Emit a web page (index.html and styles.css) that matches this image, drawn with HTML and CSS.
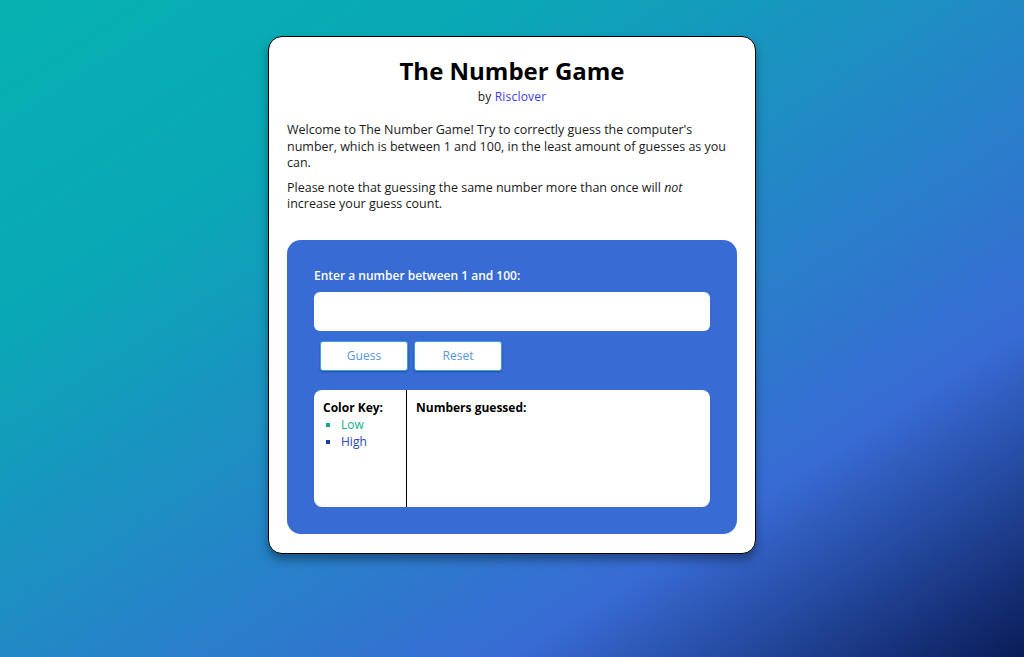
FILE: index.html
```html
<!DOCTYPE html>
<html lang="en">
<head>
<meta charset="utf-8">
<title>The Number Game</title>
<link rel="stylesheet" href="styles.css">
</head>
<body>
<main class="card">
  <header class="head">
    <h1 class="title">The Number Game</h1>
    <p class="byline">by <a class="author" href="#">Risclover</a></p>
  </header>
  <p class="intro">Welcome to The Number Game! Try to correctly guess the computer's number, which is between 1 and 100, in the least amount of guesses as you can.</p>
  <p class="intro">Please note that guessing the same number more than once will <em>not</em> increase your guess count.</p>
  <section class="panel">
    <label class="prompt" for="guess">Enter a number between 1 and 100:</label>
    <input class="field" id="guess" type="text">
    <div class="actions">
      <button class="btn" type="button">Guess</button>
      <button class="btn" type="button">Reset</button>
    </div>
    <div class="results">
      <div class="key">
        <div class="heading">Color Key:</div>
        <ul class="key-list">
          <li class="low">Low</li>
          <li class="high">High</li>
        </ul>
      </div>
      <div class="guessed">
        <div class="heading">Numbers guessed:</div>
      </div>
    </div>
  </section>
</main>
</body>
</html>
```

FILE: styles.css
```css
* { box-sizing: border-box; }
html, body { height: 100%; }
body {
  margin: 0;
  font-family: "Open Sans", "DejaVu Sans", sans-serif;
  font-size: 12px;
  color: #1a1a1a;
  background: linear-gradient(to bottom right, #05b1b1 0%, #0aa8b6 25%, #386bd4 75%, #0a1c58 100%);
  padding-top: 36px;
}
.card {
  width: 488px;
  margin: 0 auto;
  background: #fff;
  border: 1px solid #000;
  border-radius: 14px;
  padding: 17px 18px 19px;
  box-shadow: 0 6px 10px rgba(0, 0, 0, 0.35);
}
.head { text-align: center; }
.title {
  margin: 0;
  font-size: 24px;
  line-height: 34px;
  font-weight: 700;
  color: #000;
}
.byline { margin: 0; line-height: 17px; letter-spacing: 0.2px; }
.author { color: #3a3ae6; text-decoration: none; }
.intro {
  margin: 17px 0 0;
  padding-right: 7px;
  font-size: 12.5px;
  line-height: 16.5px;
}
.intro + .intro { margin-top: 8px; }
.panel {
  margin-top: 27px;
  background: #386bd4;
  border-radius: 14px;
  padding: 27px;
  display: flex;
  flex-direction: column;
}
.prompt {
  color: #fff;
  font-weight: 600;
  line-height: 17px;
}
.field {
  margin-top: 8px;
  height: 39px;
  border: none;
  border-radius: 6px;
  background: #fff;
  font: inherit;
  padding: 0 10px;
}
.actions {
  display: flex;
  gap: 6px;
  margin: 10px 0 0 6px;
}
.btn {
  width: 88px;
  height: 30px;
  background: #fff;
  border: 1px solid #3aa4e0;
  border-radius: 3px;
  color: #5a94dc;
  font: inherit;
  box-shadow: 0 1px 2px rgba(0, 0, 0, 0.3);
}
.results {
  margin-top: 19px;
  height: 117px;
  background: #fff;
  border-radius: 8px;
  display: flex;
}
.key {
  width: 93px;
  border-right: 1px solid #000;
  padding: 10px 9px;
}
.guessed { flex: 1; padding: 10px 9px; }
.heading { font-weight: 700; color: #000; line-height: 15px; }
.key-list {
  margin: 1px 0 0;
  padding: 0 0 0 18px;
  list-style: square;
}
.key-list li { line-height: 17px; }
.low { color: #12b08c; }
.high { color: #2a46b8; }
.low::marker { color: #12a88a; }
.high::marker { color: #1a3bb0; }
```
